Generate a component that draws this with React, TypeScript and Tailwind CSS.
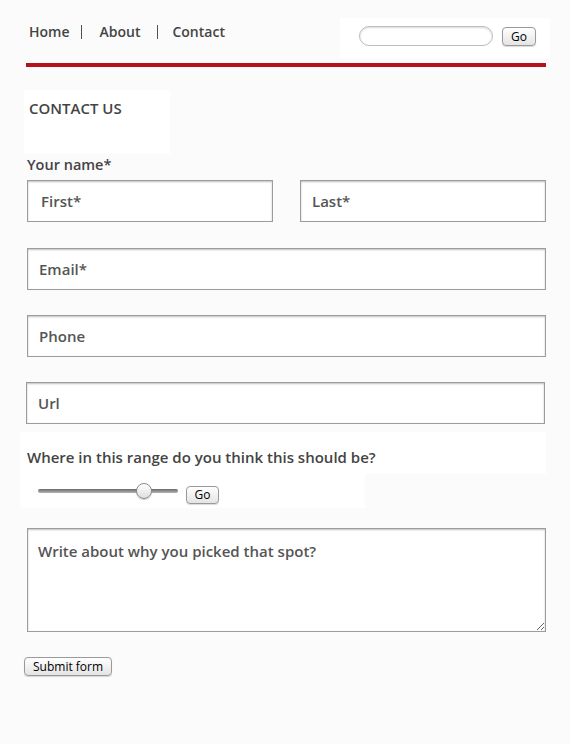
import { useState } from 'react'

const font = { fontFamily: '"Open Sans", "Liberation Sans", sans-serif' }

const macBtn =
  'rounded-[4px] border border-[#9a9a9a] bg-gradient-to-b from-white to-[#e4e4e4] text-[12px] leading-none text-black shadow-[0_1px_1px_rgba(0,0,0,0.15)]'

const field =
  'block h-[42px] w-full border border-[#9c9c9c] bg-white px-[11px] text-[15px] font-semibold text-[#444] shadow-[inset_0_1px_2px_rgba(0,0,0,0.25)] outline-none placeholder:text-[#555]'

function Slider() {
  const [value] = useState(76)
  return (
    <div className="relative h-[16px] w-[140px]">
      <div className="absolute left-0 right-0 top-[6px] h-[4px] rounded-full bg-gradient-to-b from-[#6a6a6a] to-[#b5b5b5]" />
      <div
        className="absolute top-0 h-[16px] w-[16px] -translate-x-1/2 rounded-full border border-[#8a8a8a] bg-gradient-to-b from-white to-[#dedede] shadow-[0_1px_1px_rgba(0,0,0,0.2)]"
        style={{ left: `${value}%` }}
      />
    </div>
  )
}

export default function App() {
  return (
    <div className="min-h-[744px] bg-[#fbfbfb] text-[#444] antialiased" style={font}>
      <header className="flex items-start justify-between pl-[29px] pr-[20px] pt-[18px]">
        <nav className="mt-[3px] flex items-center text-[14px] font-semibold leading-[21px] text-[#444]">
          <a href="#home">Home</a>
          <span className="ml-[11px] mr-[18px] h-[14px] w-px bg-[#555]" />
          <a href="#about">About</a>
          <span className="ml-[17px] mr-[14px] h-[14px] w-px bg-[#555]" />
          <a href="#contact">Contact</a>
        </nav>
        <form className="flex h-[40px] w-[210px] items-center bg-white pl-[19px]">
          <input
            type="text"
            className="-mt-[4px] h-[20px] w-[134px] rounded-full border border-[#bdbdbd] bg-white shadow-[inset_0_1px_2px_rgba(0,0,0,0.15)] outline-none"
          />
          <button type="button" className={`-mt-[3px] ml-[9px] h-[19px] w-[34px] ${macBtn}`}>
            Go
          </button>
        </form>
      </header>

      <div className="ml-[26px] mr-[24px] mt-[5px] h-[4px] bg-[#b5121b]" />

      <main className="pl-[27px] pr-[24px]">
        <div className="-ml-[3px] mt-[23px] h-[64px] w-[146px] bg-white pl-[5px] pt-[7px]">
          <h1 className="text-[15px] font-semibold uppercase text-[#444]">Contact us</h1>
        </div>

        <label className="block text-[14.5px] font-semibold leading-[21px] text-[#444]">Your name*</label>
        <div className="mt-[5px] grid grid-cols-2 gap-[27px]">
          <input className={`${field} pl-[13px]`} placeholder="First*" />
          <input className={field} placeholder="Last*" />
        </div>

        <div className="mt-[26px] flex flex-col gap-[25px]">
          <input className={field} placeholder="Email*" />
          <input className={field} placeholder="Phone" />
          <input className={`${field} -ml-px`} placeholder="Url" />
        </div>

        <div className="-ml-[7px] mt-[8px] bg-white pb-[6px] pl-[7px] pt-[14px]">
          <p className="text-[15px] font-semibold leading-[22px] text-[#444]">Where in this range do you think this should be?</p>
        </div>
        <div className="-ml-[7px] flex h-[34px] w-[345px] items-center bg-white pl-[18px]">
          <Slider />
          <button type="button" className={`ml-[8px] mt-[8px] h-[18px] w-[33px] ${macBtn}`}>
            Go
          </button>
        </div>

        <textarea
          className="mt-[20px] block h-[104px] w-full border border-[#9c9c9c] bg-white px-[10px] py-[11px] text-[15px] font-semibold text-[#444] shadow-[inset_0_1px_2px_rgba(0,0,0,0.25)] outline-none placeholder:text-[#555]"
          placeholder="Write about why you picked that spot?"
        />

        <button type="button" className={`-ml-[3px] mt-[25px] h-[19px] px-[8px] ${macBtn}`}>
          Submit form
        </button>
      </main>
    </div>
  )
}
